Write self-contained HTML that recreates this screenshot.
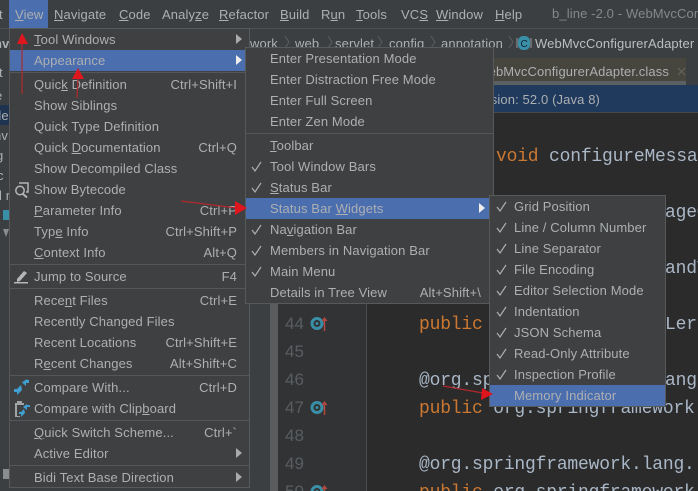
<!DOCTYPE html>
<html><head><meta charset="utf-8"><style>
html,body{margin:0;padding:0;background:#2b2b2b}
#p{position:relative;width:698px;height:491px;overflow:hidden;background:#2b2b2b;font:13px/21px "Liberation Sans",sans-serif;color:#adafb1;letter-spacing:.12px}
#p div,#p span.a,#p svg{position:absolute}
.t{white-space:nowrap}
u{text-underline-offset:1px;text-decoration-thickness:1px}
.m{background:#3e4042;box-shadow:0 0 0 1px #57595b}
.r{height:21px;white-space:nowrap}
.s{text-align:right;white-space:nowrap;height:21px}
.l{height:1px;background:#54575a}
.h{background:#4b6eaf;height:21px}
.c{font:18px/28px "Liberation Mono",monospace;color:#a9b7c6;letter-spacing:-.2px;white-space:nowrap}
.k{color:#cc7832}
.n{font:17px/28px "Liberation Sans",sans-serif;color:#5a5d60;letter-spacing:0}
.tri{width:0;height:0;border-left:6px solid #a8aaac;border-top:5px solid transparent;border-bottom:5px solid transparent}
</style></head><body><div id="p">
<!-- base regions -->
<div style="left:0;top:0;width:698px;height:28px;background:#3c3f41"></div>
<div style="left:0;top:28px;width:698px;height:1px;background:#4f5254"></div>
<div style="left:0;top:29px;width:698px;height:29px;background:#3c3f41"></div>
<div style="left:0;top:58px;width:698px;height:27px;background:#3c3f41"></div>
<div style="left:493px;top:58px;width:193px;height:26px;background:#46463f"></div>
<div style="left:493px;top:81px;width:193px;height:4px;background:#5c6063"></div>
<div style="left:0;top:85px;width:698px;height:27px;background:#1f3a5c"></div>
<div style="left:0;top:112px;width:698px;height:1px;background:#45484a"></div>
<div style="left:0;top:113px;width:270px;height:378px;background:#3c3f41"></div>
<div style="left:270px;top:113px;width:8px;height:378px;background:#5a5c5e"></div>
<div style="left:278px;top:113px;width:88px;height:378px;background:#313335"></div>
<div style="left:366px;top:113px;width:1px;height:378px;background:#4a4c4e"></div>
<div style="left:0;top:30px;width:9px;height:461px;background:#3c3f41"></div>
<!-- left strip -->
<div style="left:0;top:105px;width:9px;height:20px;background:#1d3350"></div>
<div class="t" style="left:-1px;top:4px">t</div>
<div class="t" style="left:-6px;top:33px;font-weight:bold">nv</div>
<div class="t" style="left:-1px;top:62px">t</div>
<div class="t" style="left:-5px;top:85px">e</div>
<div class="t" style="left:-6px;top:105px">de</div>
<div class="t" style="left:-6px;top:125px">nv</div>
<div class="t" style="left:-4px;top:145px">g</div>
<div class="t" style="left:-3px;top:165px">c</div>
<div class="t" style="left:-1px;top:185px">l r</div>
<div style="left:3px;top:210px;width:6px;height:10px;background:#3a8fa8"></div>
<div style="left:3px;top:229px;width:0;height:0;border-left:3px solid transparent;border-right:3px solid transparent;border-top:8px solid #8b8d8f"></div>
<div style="left:3px;top:469px;width:6px;height:10px;background:#8a8c8e"></div>
<!-- menubar -->
<div style="left:9px;top:0;width:39px;height:28px;background:#4b6eaf"></div>
<div class="t" style="left:15px;top:4px"><u>V</u>iew</div>
<div class="t" style="left:54px;top:4px"><u>N</u>avigate</div>
<div class="t" style="left:119px;top:4px"><u>C</u>ode</div>
<div class="t" style="left:162px;top:4px">Analy<u>z</u>e</div>
<div class="t" style="left:219px;top:4px"><u>R</u>efactor</div>
<div class="t" style="left:280px;top:4px"><u>B</u>uild</div>
<div class="t" style="left:321px;top:4px">R<u>u</u>n</div>
<div class="t" style="left:356px;top:4px"><u>T</u>ools</div>
<div class="t" style="left:401px;top:4px">VC<u>S</u></div>
<div class="t" style="left:436px;top:4px"><u>W</u>indow</div>
<div class="t" style="left:495px;top:4px"><u>H</u>elp</div>
<div class="t" style="left:552px;top:3px;color:#85888a">b_line -2.0 - WebMvcConfigurerAdapter</div>
<!-- breadcrumb -->
<div class="t" style="left:250px;top:33px">work</div>
<div class="t" style="left:295px;top:33px">web</div>
<div class="t" style="left:335px;top:33px">servlet</div>
<div class="t" style="left:389px;top:33px">config</div>
<div class="t" style="left:441px;top:33px">annotation</div>
<svg style="left:284px;top:36px" width="230" height="14" fill="none" stroke="#5c5f61"><path d="M1 0l4 6-4 6M44 0l4 6-4 6M94 0l4 6-4 6M147 0l4 6-4 6M225 0l4 6-4 6"/></svg>
<svg style="left:516px;top:35px" width="16" height="16"><rect x="2" y="1" width="12" height="14" rx="5" fill="#3a8fa8"/><path d="M1 3v10M15 3v10" stroke="#999"/><text x="4.500" y="12" font-size="10" font-family="Liberation Sans" fill="#123">C</text></svg>
<div class="t" style="left:535px;top:33px;color:#bcbec0">WebMvcConfigurerAdapter</div>
<!-- tab & notification -->
<div class="t" style="right:29px;top:61px">WebMvcConfigurerAdapter.class</div>
<svg style="left:677px;top:67px" width="9" height="9" stroke="#66675f"><path d="M1 1l7 7M8 1l-7 7"/></svg>
<div class="t" style="right:98px;top:89px">version: 52.0 (Java 8)</div>
<!-- code -->
<div class="c" style="left:496px;top:143px"><span class="k">void</span> configureMessa</div>
<div class="c" style="left:665px;top:199px">ageC</div>
<div class="c" style="left:665px;top:255px">andT</div>
<div class="c" style="left:419px;top:311px"><span class="k">public</span></div>
<div class="c" style="left:665px;top:311px">LerE</div>
<div class="c" style="left:419px;top:367px">@org.sp</div>
<div class="c" style="left:665px;top:367px">ang.</div>
<div class="c" style="left:419px;top:395px"><span class="k">public</span> org.springframework</div>
<div class="c" style="left:419px;top:451px">@org.springframework.lang.</div>
<div class="c" style="left:419px;top:479px"><span class="k">public</span> org.springframework</div>
<!-- gutter -->
<div class="n" style="left:285px;top:310px">44</div>
<div class="n" style="left:285px;top:338px">45</div>
<div class="n" style="left:285px;top:366px">46</div>
<div class="n" style="left:285px;top:394px">47</div>
<div class="n" style="left:285px;top:422px">48</div>
<div class="n" style="left:285px;top:450px">49</div>
<div class="n" style="left:285px;top:478px">50</div>
<svg style="left:310px;top:315px" width="20" height="18"><circle cx="7" cy="8.500" r="5" fill="none" stroke="#3a8fa8" stroke-width="3"/><circle cx="7" cy="8.500" r="1.500" fill="#3a8fa8"/><path d="M14.500 16V4" stroke="#b5483f" stroke-width="1.500"/><path d="M11.500 6l3-4 3 4z" fill="#b5483f"/></svg>
<svg style="left:310px;top:399px" width="20" height="18"><circle cx="7" cy="8.500" r="5" fill="none" stroke="#3a8fa8" stroke-width="3"/><circle cx="7" cy="8.500" r="1.500" fill="#3a8fa8"/><path d="M14.500 16V4" stroke="#b5483f" stroke-width="1.500"/><path d="M11.500 6l3-4 3 4z" fill="#b5483f"/></svg>
<svg style="left:310px;top:483px" width="20" height="18"><circle cx="7" cy="8.500" r="5" fill="none" stroke="#3a8fa8" stroke-width="3"/><circle cx="7" cy="8.500" r="1.500" fill="#3a8fa8"/><path d="M14.500 16V4" stroke="#b5483f" stroke-width="1.500"/><path d="M11.500 6l3-4 3 4z" fill="#b5483f"/></svg>

<!-- menu 1 -->
<div class="m" style="left:10px;top:29px;width:239px;height:458px"></div>
<div class="h" style="left:10px;top:50px;width:235px"></div>
<div class="l" style="left:10px;top:72px;width:239px"></div>
<div class="l" style="left:10px;top:264px;width:239px"></div>
<div class="l" style="left:10px;top:288px;width:239px"></div>
<div class="l" style="left:10px;top:375px;width:239px"></div>
<div class="l" style="left:10px;top:420px;width:239px"></div>
<div class="l" style="left:10px;top:465px;width:239px"></div>
<div class="r" style="left:34px;top:29px"><u>T</u>ool Windows</div>
<div class="r" style="left:34px;top:50px">Appearance</div>
<div class="r" style="left:34px;top:74px">Quic<u>k</u> Definition</div>
<div class="r" style="left:34px;top:95px">Show Siblings</div>
<div class="r" style="left:34px;top:116px">Quick Type Definition</div>
<div class="r" style="left:34px;top:137px">Quick <u>D</u>ocumentation</div>
<div class="r" style="left:34px;top:158px">Show Decompiled Class</div>
<div class="r" style="left:34px;top:179px">Show Bytecode</div>
<div class="r" style="left:34px;top:200px"><u>P</u>arameter Info</div>
<div class="r" style="left:34px;top:221px">Typ<u>e</u> Info</div>
<div class="r" style="left:34px;top:242px"><u>C</u>ontext Info</div>
<div class="r" style="left:34px;top:266px">Jump to Source</div>
<div class="r" style="left:34px;top:290px">Rece<u>n</u>t Files</div>
<div class="r" style="left:34px;top:311px">Recently Changed Files</div>
<div class="r" style="left:34px;top:332px">Recent Locations</div>
<div class="r" style="left:34px;top:353px">R<u>e</u>cent Changes</div>
<div class="r" style="left:34px;top:377px">Compare With...</div>
<div class="r" style="left:34px;top:398px">Compare with Clip<u>b</u>oard</div>
<div class="r" style="left:34px;top:422px"><u>Q</u>uick Switch Scheme...</div>
<div class="r" style="left:34px;top:443px">Active Editor</div>
<div class="r" style="left:34px;top:467px">Bidi Text Base Direction</div>
<div class="s" style="right:461px;top:74px">Ctrl+Shift+I</div>
<div class="s" style="right:461px;top:137px">Ctrl+Q</div>
<div class="s" style="right:461px;top:200px">Ctrl+P</div>
<div class="s" style="right:461px;top:221px">Ctrl+Shift+P</div>
<div class="s" style="right:461px;top:242px">Alt+Q</div>
<div class="s" style="right:461px;top:266px">F4</div>
<div class="s" style="right:461px;top:290px">Ctrl+E</div>
<div class="s" style="right:461px;top:332px">Ctrl+Shift+E</div>
<div class="s" style="right:461px;top:353px">Alt+Shift+C</div>
<div class="s" style="right:461px;top:377px">Ctrl+D</div>
<div class="s" style="right:461px;top:422px">Ctrl+`</div>
<div class="tri" style="left:236px;top:34px"></div>
<div class="tri" style="left:236px;top:55px;border-left-color:#eee"></div>
<div class="tri" style="left:236px;top:448px"></div>
<div class="tri" style="left:236px;top:472px"></div>
<!-- menu 1 icons -->
<svg style="left:14px;top:181px" width="15" height="17" fill="none" stroke="#b4b6b8" stroke-width="1.500"><circle cx="6" cy="9.500" r="4.200"/><path d="M9 13l4 3.500" stroke-width="2"/><path d="M5 2h9v9h-2"/></svg>
<svg style="left:14px;top:268px" width="15" height="18"><path d="M3 11l7-8 3 2-7 8-3 1z" fill="#b4b6b8"/><rect x="0" y="14" width="14" height="1.500" fill="#b4b6b8"/></svg>
<svg style="left:14px;top:379px" width="16" height="17" fill="#3f9fd0"><path d="M15 1v3h-3v3l-4-3.500 4-3z"/><path d="M7 6l-4 4H0v3h3v3l5-5z"/></svg>
<svg style="left:14px;top:400px" width="17" height="18"><path d="M1 3h9v2H3v11h3v1H1z" fill="#a0a2a4"/><rect x="3" y="1" width="5" height="3" fill="#a0a2a4"/><path d="M16 5v2h-3v3l-4-3 4-3v1z" fill="#3f9fd0"/><path d="M10 9l-3 3H5v2h2v3l4-4z" fill="#3f9fd0"/></svg>

<!-- menu 2 -->
<div class="m" style="left:246px;top:48px;width:247px;height:255px"></div>
<div class="h" style="left:246px;top:198px;width:244px"></div>
<div class="l" style="left:246px;top:133px;width:247px"></div>
<div class="r" style="left:270px;top:48px">Enter Presentation Mode</div>
<div class="r" style="left:270px;top:69px">Enter Distraction Free Mode</div>
<div class="r" style="left:270px;top:90px">Enter Full Screen</div>
<div class="r" style="left:270px;top:111px">Enter Zen Mode</div>
<div class="r" style="left:270px;top:135px"><u>T</u>oolbar</div>
<div class="r" style="left:270px;top:156px">Tool Window Bars</div>
<div class="r" style="left:270px;top:177px"><u>S</u>tatus Bar</div>
<div class="r" style="left:270px;top:198px">Status Bar <u>W</u>idgets</div>
<div class="r" style="left:270px;top:219px">Na<u>v</u>igation Bar</div>
<div class="r" style="left:270px;top:240px">Members in Navigation Bar</div>
<div class="r" style="left:270px;top:261px">Main Menu</div>
<div class="r" style="left:270px;top:282px">Details in Tree View</div>
<div class="s" style="right:217px;top:282px">Alt+Shift+\</div>
<div class="tri" style="left:479px;top:203px;border-left-color:#eee"></div>
<svg style="left:251px;top:160px" width="12" height="140" fill="none" stroke="#adafb1" stroke-width="1.200"><path d="M1 7l3 4 6-9M1 28l3 4 6-9M1 70l3 4 6-9M1 91l3 4 6-9M1 112l3 4 6-9"/></svg>

<!-- menu 3 -->
<div class="m" style="left:490px;top:196px;width:175px;height:210px"></div>
<div class="h" style="left:490px;top:385px;width:175px"></div>
<div class="r" style="left:514px;top:196px">Grid Position</div>
<div class="r" style="left:514px;top:217px">Line / Column Number</div>
<div class="r" style="left:514px;top:238px">Line Separator</div>
<div class="r" style="left:514px;top:259px">File Encoding</div>
<div class="r" style="left:514px;top:280px">Editor Selection Mode</div>
<div class="r" style="left:514px;top:301px">Indentation</div>
<div class="r" style="left:514px;top:322px">JSON Schema</div>
<div class="r" style="left:514px;top:343px">Read-Only Attribute</div>
<div class="r" style="left:514px;top:364px">Inspection Profile</div>
<div class="r" style="left:514px;top:385px">Memory Indicator</div>
<svg style="left:496px;top:200px" width="12" height="180" fill="none" stroke="#adafb1" stroke-width="1.200"><path d="M1 7l3 4 6-9M1 28l3 4 6-9M1 49l3 4 6-9M1 70l3 4 6-9M1 91l3 4 6-9M1 112l3 4 6-9M1 133l3 4 6-9M1 154l3 4 6-9M1 175l3 4 6-9"/></svg>

<!-- red annotations -->
<svg style="left:0;top:0" width="698" height="491">
<g stroke="#b2282c" stroke-width="1.200" fill="none"><path d="M22 94V42M77 98l1-20M181 201l56 7M443 386l40 7"/></g>
<g fill="#e0161e"><path d="M22 33l6 11H17zM78 68l6 11H72zM247 208l-12 7v-14zM493 394l-12 6 1-12z"/></g>
</svg>
</div></body></html>
